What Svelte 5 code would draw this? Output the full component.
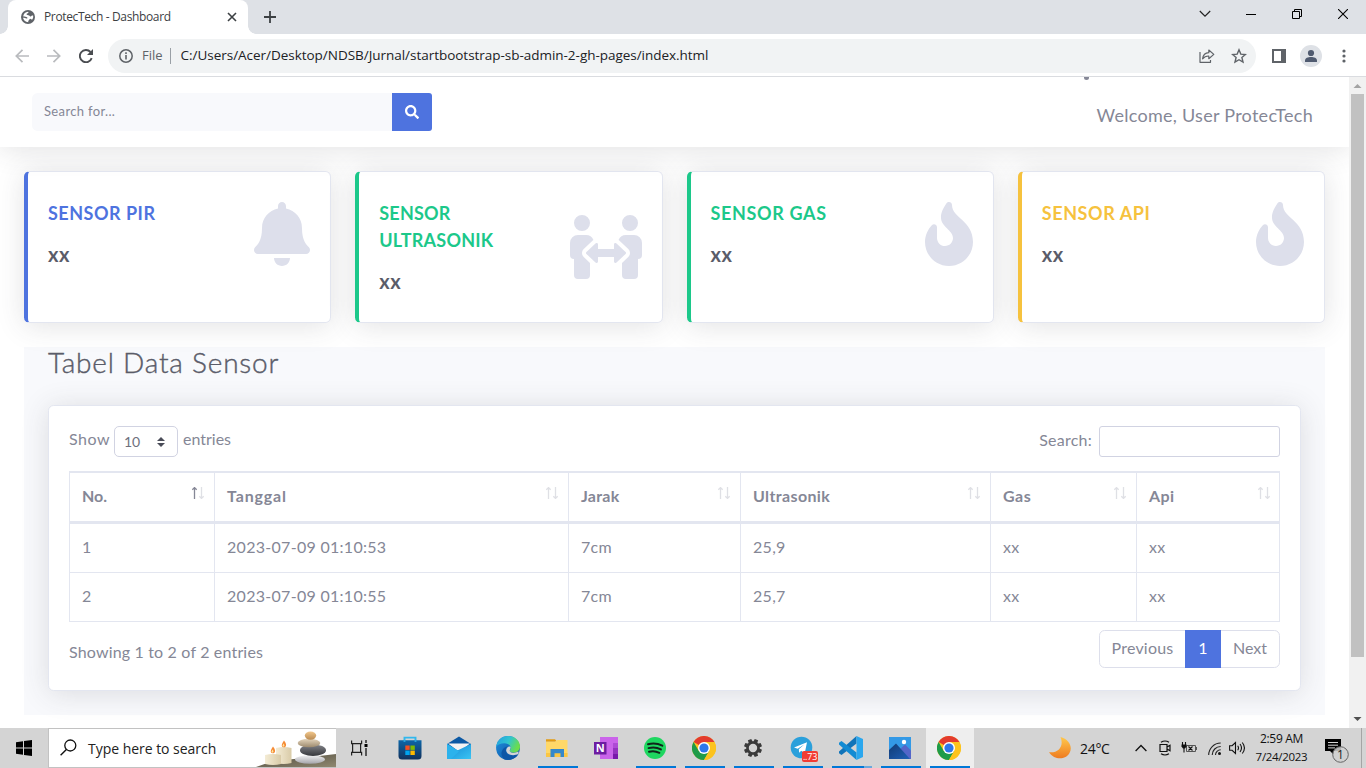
<script>
  const firePath = 'M216 23.86c0-23.8-30.65-32.77-44.15-13.04C48 191.85 224 200 224 288c0 35.63-29.11 64.46-64.85 63.99-35.17-.45-63.15-29.77-63.15-64.94v-85.51c0-21.7-26.47-32.23-41.43-16.5C27.8 213.16 0 261.33 0 320c0 105.87 86.13 192 192 192s192-86.13 192-192c0-170.29-168-193-168-296.14z';
  const bellPath = 'M224 512c35.32 0 63.97-28.65 63.97-64H160.03c0 35.35 28.65 64 63.97 64zm215.39-149.71c-19.32-20.76-55.47-51.99-55.47-154.29 0-77.7-54.48-139.9-127.94-155.16V32c0-17.67-14.32-32-31.98-32s-31.98 14.33-31.98 32v20.84C118.56 68.1 64.08 130.3 64.08 208c0 102.3-36.15 133.53-55.47 154.29-6 6.45-8.66 14.16-8.61 21.71.11 16.4 12.98 32 32.1 32h383.8c19.12 0 32-15.6 32.1-32 .05-7.55-2.61-15.27-8.61-21.71z';
  const peoplePath = 'M96,128A64,64,0,1,0,32,64,64,64,0,0,0,96,128Zm0,176.08a44.11,44.11,0,0,1,13.64-32L181.77,204c1.65-1.55,3.77-2.31,5.61-3.57A63.91,63.91,0,0,0,128,160H64A64,64,0,0,0,0,224v96a32,32,0,0,0,32,32V480a32,32,0,0,0,32,32h64a32,32,0,0,0,32-32V383.61l-50.36-47.53A44.08,44.08,0,0,1,96,304.08ZM480,128a64,64,0,1,0-64-64A64,64,0,0,0,480,128Zm32,32H448a63.91,63.91,0,0,0-59.38,40.42c1.84,1.27,4,2,5.62,3.59l72.12,68.06a44.37,44.37,0,0,1,0,64L416,383.62V480a32,32,0,0,0,32,32h64a32,32,0,0,0,32-32V352a32,32,0,0,0,32-32V224A64,64,0,0,0,512,160ZM444.4,295.34l-72.12-68.06A12,12,0,0,0,352,236v36H224V236a12,12,0,0,0-20.28-8.73L131.6,295.34a12.4,12.4,0,0,0,0,17.47l72.12,68.07A12,12,0,0,0,224,372.14V336H352v36.14a12,12,0,0,0,20.28,8.74l72.12-68.07A12.4,12.4,0,0,0,444.4,295.34Z';

  const cards = [
    { title: 'SENSOR PIR', tone: 'primary', icon: bellPath, w: 448, track: 0.5 },
    { title: 'SENSOR ULTRASONIK', tone: 'success', icon: peoplePath, w: 576, track: 0.22 },
    { title: 'SENSOR GAS', tone: 'success', icon: firePath, w: 384, track: 0.65 },
    { title: 'SENSOR API', tone: 'warning', icon: firePath, w: 384, track: 0.58 }
  ];
  const columns = [
    { name: 'No.', track: 0 }, { name: 'Tanggal', track: 0.85 }, { name: 'Jarak', track: 0.25 },
    { name: 'Ultrasonik', track: 0.37 }, { name: 'Gas', track: 0.5 }, { name: 'Api', track: 0.4 }
  ];
  const rows = [
    ['1', '2023-07-09 01:10:53', '7cm', '25,9', 'xx', 'xx'],
    ['2', '2023-07-09 01:10:55', '7cm', '25,7', 'xx', 'xx']
  ];
  const apps = [
    { id: 'store' }, { id: 'mail' }, { id: 'edge' }, { id: 'files', open: true }, { id: 'onenote' },
    { id: 'spotify', open: true }, { id: 'chrome', open: true }, { id: 'settings', open: true },
    { id: 'telegram', open: true }, { id: 'code', open: true, more: true }, { id: 'photos', open: true },
    { id: 'chrome', open: true, active: true }
  ];
  const teeth = [0, 45, 90, 135, 180, 225, 270, 315];
</script>

<div class="screen">
  <header class="tabs">
    <div class="tab">
      <svg width="14" height="14" viewBox="0 0 14 14"><circle cx="7" cy="7" r="7" fill="#5f6368" /><path d="M2.200 6.200C2.600 3.700 4.500 2 7 1.800c.8.300.6 1-.2 1.500-1 .3-1.500.8-1 1.500.8.700 2.300.2 3 1.100.5.800 1.300.6 1.800-.1.500-.4 1-.5 1.500-.2.3 1.500 0 2.900-.8 4-1 .1-1.300-.8-2-.8-.9.200-.9 1.200-1.700 1.700-.4.400-.5 1-.3 1.700C4.300 11.900 2.300 9.700 2 7.700c1.400 0 2.600.100 3.400.9.8.100 1.400-.6.900-1.200C5.200 6.700 3.700 6.900 2.200 6.200z" fill="#fff" /></svg>
      <span class="tabname">ProtecTech - Dashboard</span>
      <svg width="10" height="10" viewBox="0 0 10 10"><path d="M1 1l8 8M9 1L1 9" stroke="#3c4043" stroke-width="1.600" /></svg>
    </div>
    <svg class="plus" width="12" height="12" viewBox="0 0 12 12"><path d="M6 0v12M0 6h12" stroke="#3c4043" stroke-width="1.800" /></svg>
    <div class="winctl">
      <svg width="12" height="10" viewBox="0 0 12 10"><path d="M.8 2l5.200 5.200L11.200 2" fill="none" stroke="#222" stroke-width="1.200" /></svg>
      <svg width="10" height="10" viewBox="0 0 10 10"><path d="M0 5.500h10" stroke="#000" /></svg>
      <svg width="10" height="10" viewBox="0 0 10 10"><path d="M.5 2.500h7v7h-7zM2.500 2.500v-2h7v7h-2" fill="none" stroke="#000" /></svg>
      <svg width="10" height="10" viewBox="0 0 10 10"><path d="M0 0l10 10M10 0L0 10" stroke="#000" stroke-width="1.100" /></svg>
    </div>
  </header>

  <div class="toolbar">
    <svg class="nav" width="14" height="14" viewBox="0 0 14 14"><path d="M14 7H1.500M7.500.8L1.300 7l6.200 6.200" fill="none" stroke="#b9bbbe" stroke-width="1.700" /></svg>
    <svg class="nav" width="14" height="14" viewBox="0 0 14 14"><path d="M0 7h12.500M6.500.8L12.700 7l-6.200 6.200" fill="none" stroke="#b9bbbe" stroke-width="1.700" /></svg>
    <svg class="nav" width="14" height="14" viewBox="0 0 14 14"><path d="M12.700 9.200A6.100 6.100 0 1 1 11.500 3" fill="none" stroke="#4a4d51" stroke-width="1.900" /><path d="M14 0v6H8z" fill="#4a4d51" /></svg>
    <div class="omnibox">
      <svg width="14" height="14" viewBox="0 0 14 14"><circle cx="7" cy="7" r="6.200" fill="none" stroke="#5f6368" stroke-width="1.500" /><path d="M7 6v4.500M7 3.300v1.600" stroke="#5f6368" stroke-width="1.600" /></svg>
      <span class="scheme">File</span>
      <span class="bar"></span>
      <span class="url">C:/Users/Acer/Desktop/NDSB/Jurnal/startbootstrap-sb-admin-2-gh-pages/index.html</span>
      <svg class="share" width="16" height="14" viewBox="0 0 16 14"><path d="M1 3v10.300h10.500V11M3.600 9.800C4.100 6 6.300 3.900 9.800 3.700V1l5 4.400-5 4.300V7C7.200 6.900 5.300 7.600 3.600 9.800z" fill="none" stroke="#5f6368" stroke-width="1.200" stroke-linejoin="round" /></svg>
      <svg width="16" height="16" viewBox="0 0 16 16"><path d="M8 1.800l1.800 4.300 4.600.4-3.500 3 1.100 4.600L8 11.700l-4 2.400 1.100-4.600-3.500-3 4.600-.4z" fill="none" stroke="#5f6368" stroke-width="1.400" /></svg>
    </div>
    <svg class="panel" width="14" height="14" viewBox="0 0 14 14"><path d="M0 0h14v14H0zM2 2v10h7V2z" fill="#5f6368" fill-rule="evenodd" /></svg>
    <svg class="avatar" width="22" height="22" viewBox="0 0 22 22"><circle cx="11" cy="11" r="11" fill="#dee1e6" /><circle cx="11" cy="8" r="3.100" fill="#505b70" /><path d="M5 17v-1.500C5 13 8 12 11 12s6 1 6 3.500V17z" fill="#505b70" /></svg>
    <svg width="4" height="14" viewBox="0 0 4 14"><g fill="#5f6368"><circle cx="2" cy="2" r="1.600" /><circle cx="2" cy="7" r="1.600" /><circle cx="2" cy="12" r="1.600" /></g></svg>
  </div>

  <div class="viewport">
    <main>
      <nav class="topbar">
        <div class="search">
          <div class="field">Search for...</div>
          <button aria-label="Search"><svg width="14" height="14" viewBox="0 0 512 512"><path fill="#fff" d="M505 442.700L405.300 343c-4.500-4.500-10.600-7-17-7H372c27.600-35.300 44-79.700 44-128C416 93.100 322.900 0 208 0S0 93.100 0 208s93.100 208 208 208c48.300 0 92.700-16.400 128-44v16.300c0 6.400 2.500 12.500 7 17l99.700 99.700c9.400 9.400 24.600 9.400 33.900 0l28.300-28.300c9.400-9.400 9.400-24.600.1-34zM208 336c-70.700 0-128-57.200-128-128 0-70.700 57.200-128 128-128 70.700 0 128 57.200 128 128 0 70.700-57.200 128-128 128z" /></svg></button>
        </div>
        <div class="welcome">Welcome, User ProtecTech</div>
        <i class="dot"></i>
      </nav>

      <section class="cards">
        {#each cards as card}
          <article class="card {card.tone}">
            <div class="copy">
              <h2 style="letter-spacing:{card.track}px">{card.title}</h2>
              <p>xx</p>
            </div>
            <svg width={card.w / 8} height="64" viewBox="0 0 {card.w} 512"><path d={card.icon} fill="#dddfeb" /></svg>
          </article>
        {/each}
      </section>

      <section class="data">
        <h1>Tabel Data Sensor</h1>
        <div class="panelcard">
          <div class="controls">
            <div class="length">
              <span class="show">Show</span>
              <div class="select"><span>10</span><svg width="8" height="10" viewBox="0 0 8 10"><path d="M4 0l4 4H0zM4 10L0 6h8z" fill="#4a4c58" /></svg></div>
              <span>entries</span>
            </div>
            <div class="filter"><span>Search:</span><div class="input"></div></div>
          </div>
          <div class="table">
            {#each columns as col, i}
              <div class="th">
                <span style="letter-spacing:{col.track}px">{col.name}</span>
                <svg width="14" height="12" viewBox="0 0 14 12">
                  <path d="M3.500 12V1M1.300 2.800L3.500.6l2.200 2.200" fill="none" stroke={i === 0 ? '#858796' : '#dfe0e5'} stroke-width="1.300" />
                  <path d="M10.500 0v11M8.300 9.200l2.200 2.200 2.200-2.200" fill="none" stroke="#dfe0e5" stroke-width="1.300" />
                </svg>
              </div>
            {/each}
            {#each rows as row}
              {#each row as cell}<div class="td">{cell}</div>{/each}
            {/each}
          </div>
          <div class="foot">
            <span class="info">Showing 1 to 2 of 2 entries</span>
            <div class="pages"><span class="prev">Previous</span><span class="cur">1</span><span class="next">Next</span></div>
          </div>
        </div>
      </section>
    </main>
    <div class="scroll">
      <svg width="17" height="17" viewBox="0 0 17 17"><path d="M4.500 11l4-4 4 4z" fill="#a3a3a3" /></svg>
      <div class="thumb"></div>
      <svg width="17" height="17" viewBox="0 0 17 17"><path d="M4.500 6l4 4 4-4z" fill="#505050" /></svg>
    </div>
  </div>

  <footer class="taskbar">
    <div class="start"><svg width="16" height="16" viewBox="0 0 16 16"><path d="M0 2.300l7-1v6.200H0zM8 1.100L16 0v7.500H8zM0 8.500h7v6.200l-7-1zM8 8.500h8V16l-8-1.100z" fill="#000" /></svg></div>
    <div class="find">
      <svg class="lens" width="17" height="17" viewBox="0 0 17 17"><circle cx="10.300" cy="6.500" r="5.500" fill="none" stroke="#111" stroke-width="1.300" /><path d="M6.400 10.500L.6 16.300" stroke="#111" stroke-width="1.400" /></svg>
      <span>Type here to search</span>
      <svg class="zen" width="80" height="39" viewBox="0 0 80 39">
        <defs>
          <linearGradient id="ground" x2="1" y2="1"><stop stop-color="#4f4a3d" /><stop offset="1" stop-color="#8f8870" /></linearGradient>
          <linearGradient id="s1" x2="0" y2="1"><stop stop-color="#f2c88d" /><stop offset="1" stop-color="#b98a52" /></linearGradient>
          <linearGradient id="s2" x2="0" y2="1"><stop stop-color="#e6d6bd" /><stop offset="1" stop-color="#9d8a6e" /></linearGradient>
          <linearGradient id="s3" x2="0" y2="1"><stop stop-color="#83848a" /><stop offset="1" stop-color="#37383c" /></linearGradient>
          <linearGradient id="s4" x2="0" y2="1"><stop stop-color="#f0f0f2" /><stop offset="1" stop-color="#a5a5aa" /></linearGradient>
          <linearGradient id="wax"><stop stop-color="#f4ecd5" /><stop offset="1" stop-color="#d9cba8" /></linearGradient>
        </defs>
        <path d="M0 39q14-6 38-8l42-5v13z" fill="url(#ground)" />
        <path d="M20 20q8-2 15.500 0v15q-8 2-15.500 0z" fill="url(#wax)" />
        <path d="M9 27q8-2 16 0v9q-8 2-16 0z" fill="url(#wax)" />
        <path d="M28 12.500q3.500 4 1.200 6.500-2.500 1-3.400-1-.4-2 2.200-5.500zM17 18.500q3.500 4 1.200 6.500-2.500 1-3.400-1-.4-2 2.200-5.500z" fill="#f58b35" />
        <path d="M27.600 15.500q1.500 2 .4 3.200-1.700-.3-1.500-1.300zM16.600 21.500q1.500 2 .4 3.200-1.700-.3-1.500-1.300z" fill="#ffe6a2" />
        <ellipse cx="54" cy="31.500" rx="15" ry="4.200" fill="url(#s4)" />
        <ellipse cx="57" cy="22.200" rx="13" ry="5.800" fill="url(#s3)" />
        <ellipse cx="53" cy="15" rx="11.300" ry="4.300" fill="url(#s2)" />
        <ellipse cx="54.500" cy="7.600" rx="5.700" ry="4.200" fill="url(#s1)" />
      </svg>
    </div>
    <div class="taskview"><svg width="17" height="16" viewBox="0 0 17 16"><path d="M.6.600v3h10v-3M.6 15.400v-3h10v3M1.600 4v8.500M9.600 4v8.500" fill="none" stroke="#222" stroke-width="1.200" /><path d="M15 0v3M15 8v8" stroke="#222" stroke-width="1.400" /><path d="M13.500 4h3v3h-3z" fill="#000" /></svg></div>
    <div class="apps">
      {#each apps as app}
        <div class="app" class:open={app.open} class:active={app.active} class:more={app.more}>
          <svg width="24" height="24" viewBox="0 0 24 24">
            {#if app.id === 'store'}
              <defs><linearGradient id="st" x2="0" y2="1"><stop stop-color="#0d66a8" /><stop offset="1" stop-color="#12325d" /></linearGradient></defs>
              <path d="M6.500 6V1.600h11V6" fill="none" stroke="#31b8ee" stroke-width="1.900" />
              <path d="M.5 4.200h23V20q0 3.500-3.500 3.500H4Q.5 23.500.5 20z" fill="url(#st)" />
              <path d="M6.500 4.200v1.600M17.500 4.200v1.600" stroke="#31b8ee" stroke-width="1.900" />
              <path d="M7.300 9.500h4.400v4.400H7.300z" fill="#f25022" /><path d="M12.400 9.500h4.400v4.400h-4.400z" fill="#7fba00" /><path d="M7.300 14.600h4.400V19H7.300z" fill="#00a4ef" /><path d="M12.400 14.600h4.400V19h-4.400z" fill="#ffb900" />
            {:else if app.id === 'mail'}
              <defs><linearGradient id="ml" x2="1" y2="1"><stop stop-color="#1487d4" /><stop offset="1" stop-color="#3bc4f3" /></linearGradient></defs>
              <path d="M0 8L12 .5 24 8v7H0z" fill="#0c59a4" /><path d="M1 7.500h22L12.500 16z" fill="#f3f3f3" />
              <path d="M0 8l12.500 7.500L0 23z" fill="#2eb6ee" /><path d="M24 8v15H0l3-5z" fill="url(#ml)" /><path d="M0 8l12 7.500L4 23H0z" fill="#2cb2ec" />
            {:else if app.id === 'edge'}
              <defs><linearGradient id="e1" x2="1" y2=".4"><stop stop-color="#219ce2" /><stop offset=".55" stop-color="#30c5cf" /><stop offset="1" stop-color="#6bdd4c" /></linearGradient><linearGradient id="e2" x2="1" y2="1"><stop stop-color="#1f92e0" /><stop offset="1" stop-color="#0b4a9a" /></linearGradient></defs>
              <circle cx="12" cy="12" r="11.900" fill="url(#e2)" />
              <path d="M.2 11C1 4 6 .1 12 .1c7 0 12 5 12 10.400 0 4.200-3.300 6.200-6.300 6.200-2.600 0-4-.9-4-1.900 0-.8 1-1.300 1-3 0-2.300-2.600-4.600-6.300-4.600C4.700 7.200 1.500 8.400.2 11z" fill="url(#e1)" />
              <path d="M8 23.200c-2-2-3-5-2.300-7.500.8-3 3.200-5 6.200-5.500-1.500 1-2.200 2.800-2.100 4.600.5 4 5.300 5.800 9.400 4.600 1.400-.4 2.400-1 3.300-1.700C19.500 23 13.500 25 8 23.200z" fill="#0d56a6" />
              <path d="M14.400 10.700c.8 1.500-.7 2.700-.7 4.100 0 1.500 2.400 2.400 5 2l3.900-1.400-.1 2.300c-4.500 2.700-11.400 1.600-12.300-3-.2-2 1.700-4.600 4.200-4z" fill="#d4d4d4" />
            {:else if app.id === 'files'}
              <path d="M1 3.200h9l2 2.500H1z" fill="#e39c13" /><path d="M1 5.800h9l2-1.800h10.500v17H1z" fill="#ffd868" /><path d="M1 17h21.500v4H1z" fill="#fbc644" /><path d="M5.500 13H19v8h-3.500v-3.800h-6V21h-4z" fill="#3588cb" />
            {:else if app.id === 'onenote'}
              <path d="M6 1h18v22H6z" fill="#ca64ea" /><path d="M19 7h5v5h-5z" fill="#ae4bd5" /><path d="M19 12h5v5.500h-5z" fill="#9332bf" /><path d="M19 17.500h5V23h-5z" fill="#7719aa" /><path d="M0 6h12.500v12.500H0z" fill="#6d1da1" /><text x="6.200" y="16.200" text-anchor="middle" font-family="Open Sans, sans-serif" font-weight="700" font-size="11" fill="#fff">N</text>
            {:else if app.id === 'spotify'}
              <circle cx="12" cy="12" r="11" fill="#1ed760" /><path d="M5 8.300c5-1.400 10-.8 14.300 1.400M5.500 12.100c4.400-1.200 8.700-.7 12.400 1.300M6 15.700c3.600-1 7.200-.6 10.400 1.100" fill="none" stroke="#10251a" stroke-width="2" stroke-linecap="round" />
            {:else if app.id === 'chrome'}
              <circle cx="12" cy="12" r="12" fill="#fcc31e" />
              <path d="M12 12L1.600 6A12 12 0 0 1 22.400 6z" fill="#e33b2e" />
              <path d="M1.600 6A12 12 0 0 0 12 24l5.200-9-10.400-.1z" fill="#1f9b49" />
              <path d="M12 6h10.400A12 12 0 0 1 12 24l5.200-9z" fill="#fcc31e" />
              <circle cx="12" cy="12" r="6" fill="#fff" /><circle cx="12" cy="12" r="4.600" fill="#2e77ea" />
            {:else if app.id === 'settings'}
              <g fill="#3a3a3a">{#each teeth as t}<path d="M10.200 3h3.600l.4 4H9.800z" transform="rotate({t + 22.5} 12 12)" />{/each}</g><circle cx="12" cy="12" r="5.500" fill="none" stroke="#3a3a3a" stroke-width="2.600" />
            {:else if app.id === 'telegram'}
              <circle cx="11.500" cy="11.500" r="10.800" fill="#2ba0db" /><path d="M4 11.500l13-5.300-2.300 11.300-3.500-2.700-2 1.900-.4-3.400 5.400-4.700-6.500 4.100z" fill="#fff" />
            {:else if app.id === 'code'}
              <path d="M17.500 7.500L2.500 19 0 17.200v-1.700L17.500 0z" fill="#1074b9" /><path d="M17.500 16.500L2.500 5 0 6.800v1.700L17.500 24z" fill="#128bd3" /><path d="M17.500 0L24 3v18l-6.500 3z" fill="#2aa7ee" />
            {:else if app.id === 'photos'}
              <defs><linearGradient id="ph" x2="1" y2="1"><stop stop-color="#113b74" /><stop offset="1" stop-color="#2060b7" /></linearGradient></defs>
              <path d="M1 1h22v22H1z" fill="#3399e6" /><path d="M12 13l5-4.500 6 6V23H12z" fill="#5466c9" /><path d="M1 14l7-6.500L22 23H1z" fill="url(#ph)" /><circle cx="16" cy="6" r="2.200" fill="#fff" />
            {/if}
          </svg>
          {#if app.id === 'telegram'}<b class="count">..73</b>{/if}
        </div>
      {/each}
    </div>
    <div class="tray">
      <svg class="moon" width="24" height="24" viewBox="0 0 24 24"><defs><linearGradient id="mn" x2="0" y2="1"><stop stop-color="#ffc84c" /><stop offset="1" stop-color="#ee7b20" /></linearGradient></defs><path d="M12.500 1C21 3 25 11 21.500 17 18 23.500 7 25 1 16.200 9.500 17.500 16.500 11 12.500 1z" fill="url(#mn)" /></svg>
      <span class="temp">24°C</span>
      <svg class="chev" width="12" height="8" viewBox="0 0 12 8"><path d="M.6 7L6 1.500 11.400 7" fill="none" stroke="#111" stroke-width="1.300" /></svg>
      <svg class="cam" width="12" height="16" viewBox="0 0 12 16"><path d="M1 4.500h7v7H1zM8 7l3-1.800v5.600L8 9M2 2.200q4-2.400 8 0M2 13.800q4 2.400 8 0" fill="none" stroke="#111" stroke-width="1.200" /></svg>
      <svg class="bat" width="16" height="13" viewBox="0 0 16 13"><path d="M5.500 3.500h9v6h-9zM15.500 5v3" fill="none" stroke="#555" /><path d="M1.500 0v3M4.500 0v3M3 6v4.500M7.500 4.500l4 4M11.500 4.500l-4 4" stroke="#111" stroke-width="1.100" /><path d="M.5 2.500h5v2L4 6.500H2L.5 4.500z" fill="#111" /></svg>
      <svg class="wifi" width="13" height="13" viewBox="0 0 13 13"><path d="M.7 13A12 12 0 0 1 12.700 1M4.200 13A8.500 8.500 0 0 1 12.700 4.500M7.500 13a5.200 5.200 0 0 1 5.200-5.200" fill="none" stroke="#222" stroke-width="1.100" /><circle cx="11.500" cy="11.500" r="1.500" fill="#111" /></svg>
      <svg class="vol" width="17" height="14" viewBox="0 0 17 14"><path d="M.6 4.700h2.500L6.500 1.500v11L3.100 9.300H.6zM8.700 4.700q1.600 2.300 0 4.600M11 3q3 4 0 8M13.300 1.500q4.300 5.500 0 11" fill="none" stroke="#111" stroke-width="1.100" /></svg>
      <div class="clock"><span>2:59 AM</span><span class="date">7/24/2023</span></div>
      <div class="note">
        <svg width="26" height="26" viewBox="0 0 26 26"><path d="M0 1h16v12H9v4l-4-4H0z" fill="#000" /><path d="M3 4.500h10M3 7.200h10M3 9.900h7" stroke="#d4d4d4" /><circle cx="15.500" cy="16.500" r="7.800" fill="#d0d0d0" fill-opacity=".85" stroke="#666" /><text x="15.500" y="21" text-anchor="middle" font-family="Open Sans, sans-serif" font-size="12" fill="#222">1</text></svg>
      </div>
    </div>
    <i class="peek"></i>
  </footer>
</div>

<style>
  :global(body) { margin: 0; overflow: hidden; background: #fff; }
  .screen { width: 1366px; height: 768px; display: flex; flex-direction: column; overflow: hidden; font-family: "Open Sans", sans-serif; }
  .screen *, .screen { box-sizing: border-box; }
  svg { display: block; flex: none; }
  h1, h2, p { margin: 0; }

  .tabs { height: 34px; flex: none; background: #dee1e6; display: flex; padding-left: 8px; }
  .tab { position: relative; width: 240px; background: #fff; border-radius: 8px 8px 0 0; display: flex; align-items: center; padding: 0 11px 0 13px; }
  .tab::before, .tab::after { content: ""; position: absolute; bottom: 0; width: 8px; height: 8px; }
  .tab::before { left: -8px; background: radial-gradient(circle at 0 0, transparent 7.500px, #fff 8px); }
  .tab::after { right: -8px; background: radial-gradient(circle at 100% 0, transparent 7.500px, #fff 8px); }
  .tabname { flex: 1; margin-left: 9px; padding-bottom: 1px; font-size: 12px; letter-spacing: -.36px; color: #3c4043; white-space: nowrap; }
  .plus { margin: 11px 0 0 16px; }
  .winctl { margin-left: auto; display: grid; grid-template-columns: 46px 46px 46px 46px; justify-items: center; padding-top: 9px; }

  .toolbar { height: 43px; flex: none; display: flex; align-items: center; border-bottom: 1px solid #dadce0; padding: 1px 20px 0 15px; }
  .nav { margin-right: 18px; }
  .nav:nth-child(3) { margin-right: 15px; }
  .omnibox { width: 1150px; height: 34px; border-radius: 17px; background: #f1f3f4; display: flex; align-items: center; padding: 0 9px 0 11px; white-space: nowrap; }
  .scheme { font-size: 13px; color: #5f6368; margin-left: 9px; padding-bottom: 2px; }
  .bar { width: 1px; height: 16px; background: #9aa0a6; margin: 0 10px 0 7px; }
  .url { font-size: 13.500px; letter-spacing: -.03px; color: #202124; padding-bottom: 2px; }
  .share { margin: 0 16px 0 auto; }
  .panel { margin: 0 14px 0 16px; }
  .avatar { margin-right: 20px; }

  .viewport { flex: 1; min-height: 0; display: flex; }
  main { width: 1349px; overflow: hidden; font-family: Lato, sans-serif; font-size: 16px; color: #858796; background: #fff; }
  .topbar { position: relative; height: 70px; background: #fff; display: flex; justify-content: space-between; padding: 16px 36px 0 32px; box-shadow: 0 2.400px 28px rgba(58, 59, 69, .15); }
  .search { display: flex; width: 400px; height: 38px; }
  .field { flex: 1; background: #f8f9fc; border-radius: 5.600px 0 0 5.600px; padding-left: 12px; font-size: 13px; letter-spacing: .35px; line-height: 37px; color: #858796; }
  .search button { width: 40px; border: 0; padding: 0; background: #4e73df; border-radius: 0 3px 3px 0; display: grid; place-items: center; }
  .welcome { font-size: 18px; letter-spacing: .27px; line-height: 22px; padding-top: 11px; }
  .dot { position: absolute; left: 1084px; top: 0; width: 5px; height: 3px; background: #858796; border-radius: 0 0 3px 3px; }

  .cards { display: grid; grid-template-columns: repeat(4, 1fr); gap: 24px; padding: 24px; }
  .card { height: 152px; display: flex; align-items: flex-start; justify-content: space-between; background: #fff; border: 1px solid #e3e6f0; border-left: 4px solid; border-radius: 5.600px; padding: 28px 20px 0; box-shadow: 0 2.400px 28px rgba(58, 59, 69, .15); }
  .card svg { margin-top: 2px; }
  .card:nth-child(2) svg { margin-top: 15px; }
  .copy { width: 145px; }
  .card h2 { font-size: 18px; font-weight: 700; line-height: 27px; }
  .card p { font-size: 20px; font-weight: 700; line-height: 24px; letter-spacing: .6px; color: #5a5c69; margin-top: 15px; }
  .card.primary { border-left-color: #4e73df; } .primary h2 { color: #4e73df; }
  .card.success { border-left-color: #1cc88a; } .success h2 { color: #1cc88a; }
  .card.warning { border-left-color: #f6c23e; } .warning h2 { color: #f6c23e; }

  .data { margin: 0 24px; height: 368px; padding: 0 24px; background: #f8f9fc; }
  h1 { font-size: 28px; font-weight: 300; -webkit-text-stroke: .4px #5a5c69; line-height: 31px; letter-spacing: .8px; color: #5a5c69; margin-bottom: 27px; white-space: nowrap; }
  .panelcard { height: 286px; background: #fff; border: 1px solid #e3e6f0; border-radius: 5.600px; padding: 20px; box-shadow: 0 2.400px 28px rgba(58, 59, 69, .15); }
  .controls { display: flex; justify-content: space-between; height: 45px; align-items: flex-start; }
  .length, .filter { display: flex; line-height: 25px; }
  .show { letter-spacing: .5px; width: 45px; }
  .select { width: 64px; height: 31px; border: 1px solid #d1d3e2; border-radius: 5px; display: flex; align-items: center; justify-content: space-between; padding: 0 12px 0 9px; margin-right: 5px; font-size: 14px; color: #6e707e; }
  .select span { padding-bottom: 1px; }
  .filter span { letter-spacing: .25px; line-height: 27px; margin-right: 7px; }
  .input { width: 181px; height: 31px; border: 1px solid #d1d3e2; border-radius: 3px; }
  .table { width: 1211px; display: grid; grid-template-columns: 145px 354px 172px 250px 146px 144px; grid-template-rows: 53px 49px 49px; }
  .th, .td { border-left: 1px solid #e3e6f0; border-bottom: 1px solid #e3e6f0; padding: 0 0 0 12px; }
  .th:nth-child(6n), .td:nth-child(6n) { border-right: 1px solid #e3e6f0; }
  .th { border-top: 2px solid #e3e6f0; border-bottom-width: 3px; font-weight: 700; display: flex; justify-content: space-between; line-height: 45px; padding-right: 9px; }
  .th:nth-child(6n) { padding-right: 8px; }
  .th svg { margin-top: 14px; }
  .td { line-height: 45px; letter-spacing: .29px; }
  .foot { display: flex; justify-content: space-between; padding-top: 6px; }
  .info { letter-spacing: .17px; line-height: 48px; }
  .pages { display: flex; height: 38px; margin-top: 2px; width: 181px; border: 1px solid #dddfeb; border-radius: 5.600px; line-height: 34px; text-align: center; }
  .prev { width: 85px; letter-spacing: .2px; } .cur { width: 36px; margin: -1px 0; line-height: 36px; background: #4e73df; color: #fff; } .next { flex: 1; }

  .scroll { width: 17px; background: #f1f1f1; display: flex; flex-direction: column; }
  .thumb { width: 13px; height: 563px; background: #c1c1c1; margin: 0 2px auto; }

  .taskbar { height: 40px; flex: none; background: #d4d4d4; display: flex; color: #111; }
  .start { width: 48px; display: grid; place-items: center; }
  .find { width: 288px; border: 1px solid #c2c2c2; border-right: 0; background: #fff; display: flex; align-items: center; padding-left: 11px; font-size: 14px; letter-spacing: -.03px; color: #222; white-space: nowrap; }
  .find span { margin-left: 11px; }
  .lens { margin-bottom: 2px; }
  .zen { margin-left: auto; align-self: flex-end; }
  .taskview { width: 50px; display: grid; place-items: center; padding-right: 3px; }
  .apps { display: flex; }
  .app { position: relative; width: 49px; padding: 8px 0 0 12px; }
  .app.active { background: linear-gradient(90deg, transparent 1px, #eee 1px); }
  .app.open::after { content: ""; position: absolute; left: 5px; bottom: 0; width: 40px; height: 2px; background: #0078d7; }
  .app.more::after { background: linear-gradient(90deg, #0078d7 32px, #6aa9dd 32px); }
  .count { position: absolute; left: 24px; top: 23px; width: 16px; height: 11px; border-radius: 2px; background: #f23c34; color: #fff; font: 9px/11px "Open Sans", sans-serif; letter-spacing: -.2px; text-align: center; }
  .tray { margin-left: auto; flex: none; display: flex; align-items: center; }
  .moon { margin-right: 8px; }
  .temp { font-size: 14px; letter-spacing: -.3px; width: 55px; }
  .chev { margin-right: 12px; } .cam { margin-right: 10px; } .bat { margin-right: 11px; } .wifi { margin-right: 8px; }
  .clock { width: 69px; margin-left: 1px; display: flex; flex-direction: column; align-items: center; font-size: 12px; line-height: 18px; letter-spacing: -.3px; }
  .date { font-size: 11.500px; }
  .note { width: 45px; padding: 5px 0 0 9px; }
  .peek { width: 5px; border-left: 1px solid #a5a5a5; }
</style>
